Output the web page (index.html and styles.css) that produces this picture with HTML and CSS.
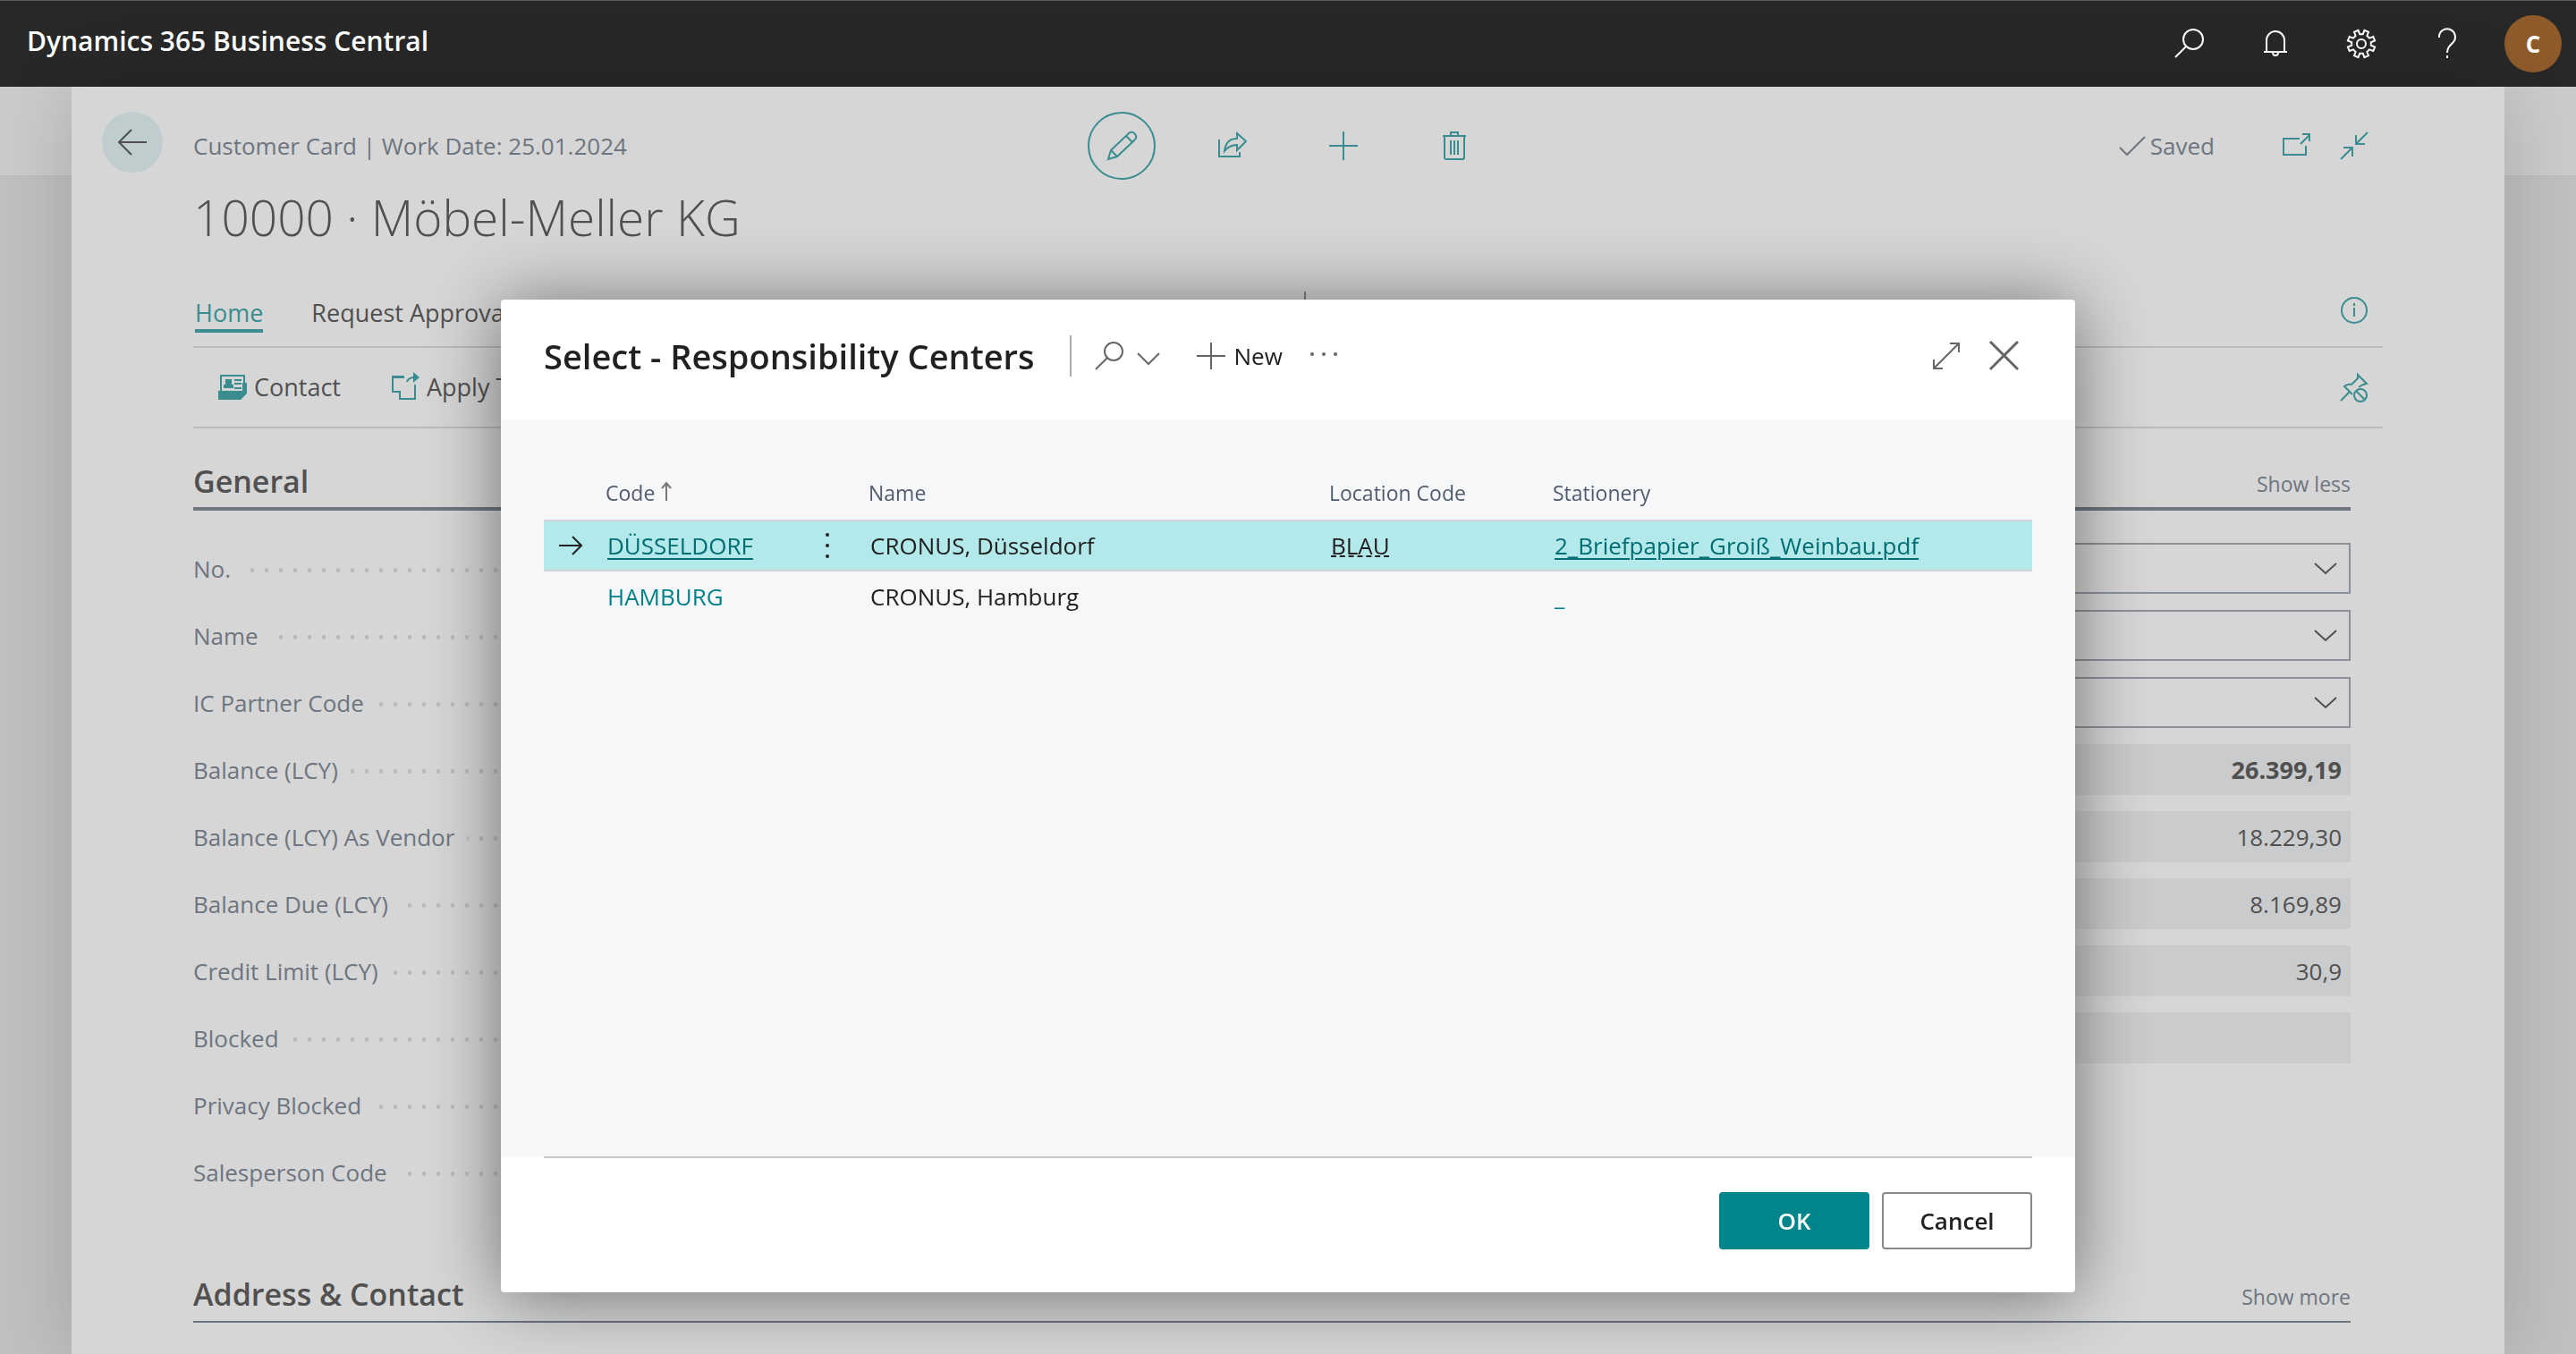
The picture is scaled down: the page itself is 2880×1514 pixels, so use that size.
FILE: index.html
```html
<!DOCTYPE html>
<html lang="en">
<head>
<meta charset="utf-8">
<title>Dynamics 365 Business Central</title>
<link rel="stylesheet" href="styles.css">
</head>
<body>
<header class="topbar">
  <span class="brand">Dynamics 365 Business Central</span>
  <nav class="topbar-actions" aria-label="Global">
    <button class="icon-btn" aria-label="Search"><svg width="36" height="36" viewBox="0 0 36 36"><circle cx="22" cy="13" r="11"/><path d="M14 21 2 33"/></svg></button>
    <button class="icon-btn" aria-label="Notifications"><svg width="36" height="36" viewBox="0 0 36 36"><path d="M5 27h26M8 27V14a10 10 0 0 1 20 0v13M15 28a3 3 0 0 0 6 0"/></svg></button>
    <button class="icon-btn" aria-label="Settings"><svg class="gear" width="36" height="36" viewBox="-18 -18 36 36"><circle r="5"/><path d="M1.8-10.8 3.5-15.1 8-13.3 6.4-9 9-6.4 13.3-8 15.1-3.5 10.8-1.8V1.8L15.1 3.5 13.3 8 9 6.4 6.4 9 8 13.3 3.5 15.1 1.8 10.8H-1.8L-3.5 15.1-8 13.3-6.4 9-9 6.4-13.3 8-15.1 3.5-10.8 1.8V-1.8L-15.1-3.5-13.3-8-9-6.4-6.4-9-8-13.3-3.5-15.1-1.8-10.8z"/></svg></button>
    <button class="icon-btn" aria-label="Help"><svg width="36" height="36" viewBox="0 0 36 36"><path d="M9 11a9 9 0 1 1 15 6c-4 4-6 6-6 11M18 31v3"/></svg></button>
    <button class="avatar" aria-label="Account">C</button>
  </nav>
</header>

<main class="workspace">
  <section class="card">
    <div class="card-head">
      <button class="back" aria-label="Back"><svg width="36" height="36" viewBox="0 0 36 36"><path d="M34 18H3M17 4 3 18l14 14"/></svg></button>
      <p class="crumb">Customer Card | Work Date: 25.01.2024</p>
      <div class="card-tools">
        <button class="tool tool-edit" aria-label="Edit"><svg width="36" height="36" viewBox="0 0 36 36"><path d="m3 33 3-10L26 4a5 5 0 0 1 7 7L13 30zM6 23l7 7M23 7l7 7"/></svg></button>
        <button class="tool" aria-label="Share"><svg width="36" height="36" viewBox="0 0 36 36"><path d="M3 11v19h23v-5M9 24c1-9 6-14 14-14V4l10 9-10 10v-6c-6 0-10 2-14 7z"/></svg></button>
        <button class="tool" aria-label="New"><svg width="36" height="36" viewBox="0 0 36 36"><path d="M2 18h32M18 2v32"/></svg></button>
        <button class="tool" aria-label="Delete"><svg width="36" height="36" viewBox="0 0 36 36"><path d="M5 7h26M14 7V3h8v4M7 7v24q0 2 2 2h18q2 0 2-2V7M14 12v16M18 12v16M22 12v16"/></svg></button>
      </div>
      <div class="card-status">
        <span class="saved"><svg width="32" height="32" viewBox="0 0 32 32"><path d="m2 18 8 8L30 6"/></svg>Saved</span>
        <button class="mini" aria-label="Open in new window"><svg width="36" height="36" viewBox="0 0 36 36"><path d="M21 10H3v18h25V18M22 16 32 6M24 5h8v8"/></svg></button>
        <button class="mini" aria-label="Collapse"><svg width="36" height="36" viewBox="0 0 36 36"><path d="M33 3 20 16M20 6v10h10M3 33l13-13M6 20h10v10"/></svg></button>
      </div>
    </div>
    <div class="card-body">
      <h1 class="card-title">10000 · Möbel-Meller KG</h1>
      <div class="tabs">
        <a class="tab tab-active" href="#home">Home</a>
        <a class="tab" href="#approval">Request Approval</a>
        <span class="tabs-split"></span>
        <button class="mini" aria-label="Details"><svg width="36" height="36" viewBox="0 0 36 36"><circle cx="18" cy="18" r="14"/><path d="M18 15v10M18 10v3"/></svg></button>
      </div>
      <div class="ribbon">
        <button class="action"><svg width="36" height="36" viewBox="0 0 36 36"><path d="M5 22V5h26v10M20 10h8M20 14h8M20 19h8"/><path class="solid" d="M2 22h27v-9h5v12l-7 7H2zM8 19v-4h2V9h7v6h2v4z"/></svg>Contact</button>
        <button class="action"><svg width="36" height="36" viewBox="0 0 36 36"><path d="M17 6H4v17h8v8h17V15M4 7h13"/><path d="M20 12c1-4 4-5 9-5"/><path class="solid" d="m27 1 7 6-7 6z"/></svg>Apply Template</button>
        <button class="mini ribbon-pin" aria-label="Unpin"><svg width="36" height="36" viewBox="0 0 36 36"><path d="m3 33 10-10M16 26 7 17q3-3 8-2l7-7V4l10 10-4 1-5 3"/><circle cx="25" cy="27" r="7"/><path d="m20 22 10 10"/></svg></button>
      </div>

      <section class="group">
        <header class="group-head group-open"><h2>General</h2><button class="more">Show less</button></header>
        <div class="form">
          <div class="labels">
            <p class="line"><span>No.</span></p>
            <p class="line"><span>Name</span></p>
            <p class="line"><span>IC Partner Code</span></p>
            <p class="line"><span>Balance (LCY)</span></p>
            <p class="line"><span>Balance (LCY) As Vendor</span></p>
            <p class="line"><span>Balance Due (LCY)</span></p>
            <p class="line"><span>Credit Limit (LCY)</span></p>
            <p class="line"><span>Blocked</span></p>
            <p class="line"><span>Privacy Blocked</span></p>
            <p class="line"><span>Salesperson Code</span></p>
          </div>
          <div class="fields">
            <div class="combo"><select aria-label="No."><option></option></select><svg width="28" height="16" viewBox="0 0 28 16"><path d="m2 2 12 11L26 2"/></svg></div>
            <div class="combo"><select aria-label="Name"><option></option></select><svg width="28" height="16" viewBox="0 0 28 16"><path d="m2 2 12 11L26 2"/></svg></div>
            <div class="combo"><select aria-label="IC Partner Code"><option></option></select><svg width="28" height="16" viewBox="0 0 28 16"><path d="m2 2 12 11L26 2"/></svg></div>
            <input class="value value-strong" aria-label="Balance (LCY)" value="26.399,19" readonly>
            <input class="value" aria-label="Balance (LCY) As Vendor" value="18.229,30" readonly>
            <input class="value" aria-label="Balance Due (LCY)" value="8.169,89" readonly>
            <input class="value" aria-label="Credit Limit (LCY)" value="30,9" readonly>
            <input class="value" aria-label="Blocked" value="" readonly>
          </div>
        </div>
      </section>
      <section class="group">
        <header class="group-head"><h2>Address &amp; Contact</h2><button class="more">Show more</button></header>
      </section>
    </div>
  </section>
</main>

<div class="overlay">
  <section class="dialog" role="dialog" aria-labelledby="dialog-title">
    <header class="dialog-head">
      <h2 id="dialog-title">Select - Responsibility Centers</h2>
      <span class="divider"></span>
      <button class="dlg-search" aria-label="Search"><svg width="36" height="36" viewBox="0 0 36 36"><circle cx="23" cy="13" r="10"/><path d="M16 20 3 33"/></svg><svg width="28" height="16" viewBox="0 0 28 16"><path d="m2 2 12 12L26 2"/></svg></button>
      <button class="dlg-new"><svg width="36" height="36" viewBox="0 0 36 36"><path d="M2 18h32M18 3v30"/></svg>New</button>
      <button class="dlg-icon dlg-dots" aria-label="More options"><svg width="36" height="36" viewBox="0 0 36 36"><circle cx="5" cy="16" r="2"/><circle cx="18" cy="16" r="2"/><circle cx="31" cy="16" r="2"/></svg></button>
      <button class="dlg-icon dlg-expand" aria-label="Expand"><svg width="36" height="36" viewBox="0 0 36 36"><path d="M4 32 32 4M22 4h10v10M4 22v10h10"/></svg></button>
      <button class="dlg-icon dlg-close" aria-label="Close"><svg width="36" height="36" viewBox="0 0 36 36"><path d="m3 2 31 31M34 2 3 33"/></svg></button>
    </header>
    <div class="dialog-body">
      <table class="list">
        <colgroup><col class="c-mark"><col class="c-code"><col class="c-menu"><col class="c-name"><col class="c-loc"><col></colgroup>
        <thead>
          <tr><th></th><th>Code <svg width="14" height="22" viewBox="0 0 14 22"><path d="M7 22V3M2 8l5-6 5 6"/></svg></th><th></th><th>Name</th><th>Location Code</th><th>Stationery</th></tr>
        </thead>
        <tbody>
          <tr class="selected">
            <td class="mark"><svg width="28" height="24" viewBox="0 0 28 24"><path d="M1 12h25M16 2l10 10-10 10"/></svg></td>
            <td><a class="link" href="#duesseldorf">DÜSSELDORF</a></td>
            <td class="menu"><button aria-label="Row options"><svg width="8" height="32" viewBox="0 0 8 32"><circle cx="4" cy="4" r="2"/><circle cx="4" cy="16" r="2"/><circle cx="4" cy="28" r="2"/></svg></button></td>
            <td>CRONUS, Düsseldorf</td>
            <td><span class="dashed">BLAU</span></td>
            <td><a class="link" href="#stationery">2_Briefpapier_Groiß_Weinbau.pdf</a></td>
          </tr>
          <tr>
            <td></td>
            <td><a href="#hamburg">HAMBURG</a></td>
            <td></td>
            <td>CRONUS, Hamburg</td>
            <td></td>
            <td><a href="#none">_</a></td>
          </tr>
        </tbody>
      </table>
    </div>
    <footer class="dialog-foot">
      <div class="dialog-buttons">
        <button class="btn btn-primary">OK</button>
        <button class="btn">Cancel</button>
      </div>
    </footer>
  </section>
</div>
</body>
</html>
```
FILE: styles.css
```css
* { box-sizing: border-box; }

body {
  margin: 0;
  height: 100vh;
  overflow: hidden;
  display: flex;
  flex-direction: column;
  font-family: "Open Sans", "Noto Sans", sans-serif;
  font-size: 26px;
  line-height: 36px;
  color: #505050;
  background: #c0c0c1;
}

h1, h2, p { margin: 0; }

button {
  border: 0;
  padding: 0;
  background: none;
  font: inherit;
  color: inherit;
}

a { color: inherit; text-decoration: none; }

svg {
  display: block;
  flex: none;
  fill: none;
  stroke: currentColor;
  stroke-width: 2;
}

/* Top bar */
.topbar {
  flex: none;
  display: flex;
  align-items: center;
  justify-content: space-between;
  height: 97px;
  padding: 0 16px 0 30px;
  background: #282828;
  border-top: 1px solid #5c5c5c;
  color: #fff;
}
.brand { font-size: 30px; font-weight: 600; padding-bottom: 6px; }
.topbar-actions { display: flex; align-items: center; }
.icon-btn { width: 96px; display: grid; place-items: center; }
.icon-btn svg { stroke-width: 2; }
.avatar {
  width: 64px;
  height: 64px;
  margin-left: 16px;
  border-radius: 50%;
  background: #8f5b2b;
  font-weight: 700;
}

/* Page behind the card */
.workspace {
  flex: 1;
  min-height: 0;
  padding: 0 80px;
  background: linear-gradient(#cbcbcb 99px, #bdbdbd 99px, #bdbdbd 101px, #c0c0c1 101px);
}
.card {
  height: 100%;
  overflow: hidden;
  background: #d6d6d6;
  box-shadow: 0 0 80px rgba(0, 0, 0, .16);
}
.card-head {
  display: grid;
  grid-template-columns: 102px 1fr auto 1fr;
  align-items: center;
  padding: 28px 136px 0 34px;
}
.back {
  width: 68px;
  height: 68px;
  display: grid;
  place-items: center;
  border-radius: 50%;
  background: #bfcdce;
  align-self: start;
}
.crumb { color: #6d7580; }
.card-tools { display: flex; gap: 48px; color: #3a8d8f; }
.tool {
  width: 76px;
  height: 76px;
  display: grid;
  place-items: center;
  border: 2px solid transparent;
  border-radius: 50%;
}
.tool-edit { border-color: #3a8d8f; }
.card-status {
  display: flex;
  align-items: center;
  justify-content: flex-end;
  gap: 28px;
  padding-right: 14px;
}
.saved { display: flex; align-items: center; gap: 4px; margin-right: 46px; color: #6d7580; }
.mini { color: #3a8d8f; }

.card-body { padding: 0 136px; }
.card-title { font-size: 55px; line-height: 76px; font-weight: 300; margin-top: 4px; }

.tabs {
  position: relative;
  display: flex;
  align-items: center;
  gap: 54px;
  height: 82px;
  margin-top: 26px;
  padding: 0 14px 0 2px;
  border-bottom: 2px solid #bababa;
}
.tab { border-bottom: 4px solid transparent; padding-top: 10px; font-size: 27px; }
.tab-active { color: #3a8d8f; border-color: #3a8d8f; }
.tabs-split {
  position: absolute;
  left: 50%;
  top: 19px;
  height: 48px;
  border-left: 2px solid #7c8288;
  margin-left: 18px;
}
.tabs .mini { margin-left: auto; }
.ribbon {
  display: flex;
  align-items: center;
  gap: 54px;
  height: 90px;
  padding: 0 14px 0 26px;
  border-bottom: 2px solid #bababa;
}
.action { display: flex; align-items: center; gap: 6px; font-size: 27px; }
.action svg { color: #3a8d8f; }
.action .solid { fill: currentColor; stroke: none; }
.ribbon-pin { margin-left: auto; }

.group { padding-right: 36px; }
.group-head {
  display: flex;
  align-items: center;
  justify-content: space-between;
  height: 92px;
  padding-top: 30px;
  border-bottom: 2px solid #6d7580;
}
.group-open { border-bottom-width: 4px; }
.group-head h2 { font-size: 34px; line-height: 44px; font-weight: 600; }
.more { padding-top: 6px; font-size: 23px; color: #6d7580; }
.form { display: grid; grid-template-columns: 1fr 1fr; gap: 60px; padding: 36px 0 48px; }
.labels, .fields { display: grid; gap: 18px; align-content: start; }
.line {
  height: 57px;
  display: flex;
  align-items: center;
  color: #6d7580;
  background: radial-gradient(circle at 2px 50%, #bcbcbc 2px, transparent 3px) 0 2px / 16px 57px repeat-x;
}
.line span { background: #d6d6d6; padding-right: 14px; }
.combo { display: grid; height: 57px; }
.combo select {
  grid-area: 1 / 1;
  appearance: none;
  width: 100%;
  border: 2px solid #8c929b;
  border-radius: 0;
  background: transparent;
}
.combo svg { grid-area: 1 / 1; place-self: center end; margin-right: 14px; }
.value {
  height: 57px;
  width: 100%;
  border: 0;
  padding: 0 10px;
  background: #cacbcc;
  font: inherit;
  color: #505050;
  text-align: right;
}
.value-strong { font-size: 27px; font-weight: 700; }

/* Lookup dialog */
.overlay {
  position: fixed;
  inset: 0;
  display: flex;
  justify-content: center;
  align-items: flex-start;
  padding-top: 335px;
}
.dialog {
  width: min(1760px, 92%);
  border-radius: 4px;
  background: #fff;
  color: #212121;
  box-shadow: 0 4px 80px rgba(0, 0, 0, .48);
}
.dialog-head {
  display: flex;
  align-items: center;
  height: 134px;
  padding: 0 62px 8px 48px;
}
.dialog-head h2 { font-size: 38px; line-height: 48px; font-weight: 600; }
.dialog-head svg { color: #666; }
.divider { height: 46px; border-left: 2px solid #a6a9b4; margin: 0 24px 0 39px; }
.dlg-search { display: flex; align-items: center; gap: 12px; }
.dlg-search svg + svg { margin-top: 6px; }
.dlg-new { display: flex; align-items: center; gap: 8px; margin-left: 38px; }
.dlg-dots { margin-left: 28px; }
.dlg-dots svg { fill: currentColor; stroke: none; }
.dlg-expand { margin-left: auto; }
.dlg-close { margin-left: 28px; }
.dlg-close svg { stroke-width: 3; }

.dialog-body { min-height: 824px; padding: 64px 48px 0; background: #f6f7f9; }
.list { width: 100%; border-collapse: collapse; table-layout: fixed; }
.c-mark { width: 69px; }
.c-code { width: 212px; }
.c-menu { width: 82px; }
.c-name { width: 515px; }
.c-loc { width: 250px; }
.list th {
  height: 49px;
  padding: 0 0 12px;
  text-align: left;
  font-size: 23px;
  line-height: 32px;
  font-weight: 400;
  color: #505c6d;
}
.list th svg { display: inline-block; color: #777; }
.list td { height: 56px; padding: 0 0 0 2px; }
.list a { color: #00808a; }
.selected { background: #b3e9eb; border-top: 2px solid #d2d3d8; border-bottom: 2px solid #d2d3d8; }
.list .link { color: #006d72; text-decoration: underline; text-decoration-thickness: 2px; text-underline-offset: 4px; }
.list .mark { padding-left: 16px; }
.menu button { display: block; margin-left: 30px; }
.menu svg { fill: currentColor; stroke: none; }
.dashed { text-decoration: underline dashed 2px; }

.dialog-foot { padding: 0 48px 48px; }
.dialog-buttons {
  display: flex;
  justify-content: flex-end;
  gap: 14px;
  padding-top: 38px;
  border-top: 2px solid #c8c8c8;
}
.btn {
  width: 168px;
  height: 64px;
  border: 2px solid #888;
  border-radius: 4px;
  background: #fff;
  font-weight: 600;
}
.btn-primary { border-color: #00868a; background: #00868a; color: #fff; }
```
